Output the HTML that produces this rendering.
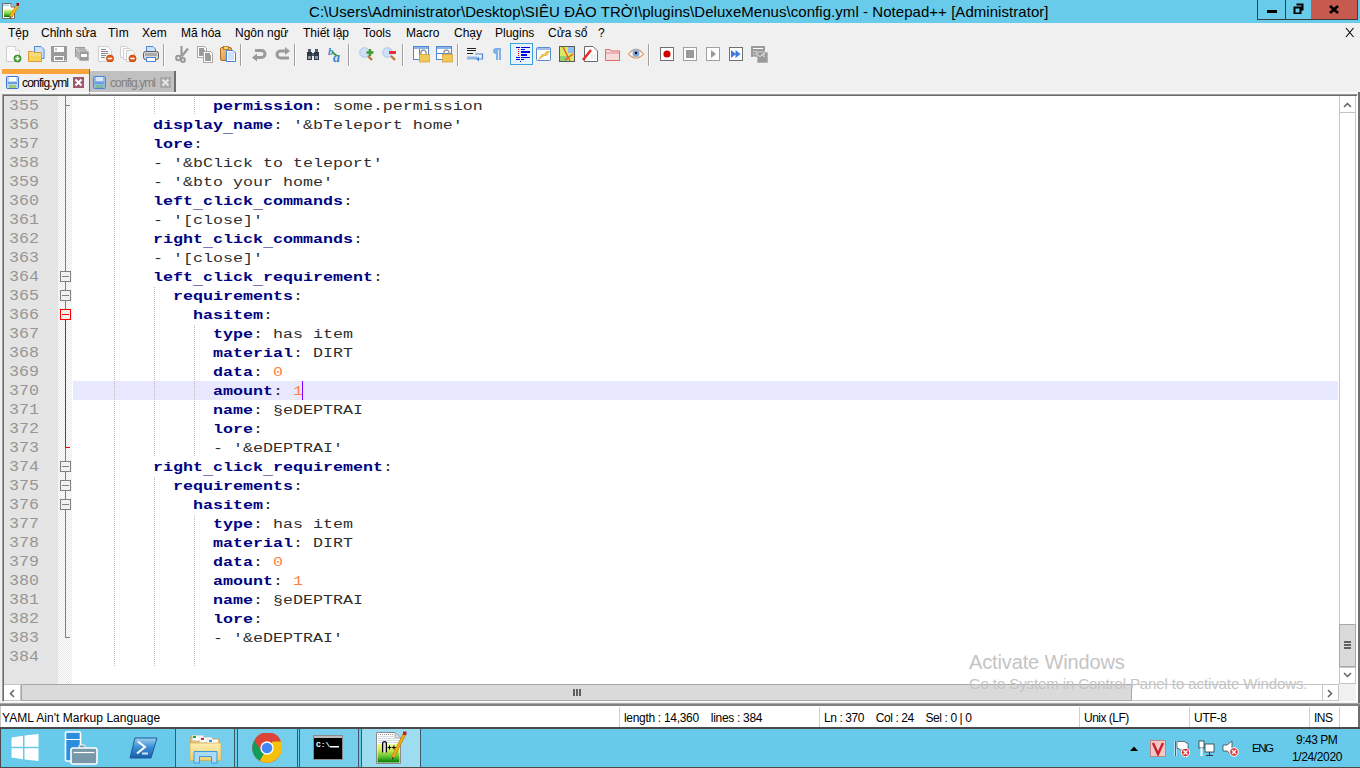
<!DOCTYPE html>
<html><head><meta charset="utf-8">
<style>
*{margin:0;padding:0;box-sizing:border-box}
html,body{width:1360px;height:768px;overflow:hidden;background:#f0f0f0;font-family:"Liberation Sans",sans-serif;position:relative}
.a{position:absolute}
#title{left:0;top:0;width:1360px;height:23px;background:#69cbea}
#ttext{left:309px;top:3px;font-size:15px;color:#000;white-space:nowrap}
.wb{top:0;height:20px;border:1px solid #3c3c3c;border-top:none}
#menu{left:0;top:23px;width:1360px;height:19px;background:#f0f0f0}
.mi{top:26px;font-size:12px;color:#000;white-space:nowrap}
.sep{top:44px;width:2px;height:22px;border-left:1px solid #a0a0a0;border-right:1px solid #fff}
.ic{top:46px;width:16px;height:16px}
#ed{left:2px;top:94px;width:1356px;height:608px;border-top:1px solid #a0a0a0;border-left:1px solid #a0a0a0;border-right:1px solid #fff;border-bottom:1px solid #fff;background:#fff;box-shadow:inset 1px 1px 0 #696969}
#lnm{left:4px;top:96px;width:54px;height:588px;background:#e4e4e4}
#fm{left:58px;top:96px;width:14px;height:588px;background-color:#fff;background-image:linear-gradient(45deg,#e8e8e8 25%,transparent 25%,transparent 75%,#e8e8e8 75%),linear-gradient(45deg,#e8e8e8 25%,transparent 25%,transparent 75%,#e8e8e8 75%);background-size:2px 2px;background-position:0 1px,1px 0}
.ln{left:9px;height:19px;font-family:"Liberation Mono",monospace;font-size:16.6667px;color:#969696;line-height:19px;transform:scaleY(0.91);transform-origin:0 14px}
.code{left:73px;height:19px;font-family:"Liberation Mono",monospace;font-size:16.6667px;color:#2e2e2e;white-space:pre;line-height:19px;transform:scaleY(0.8);transform-origin:0 14px}
.k{color:#000080;font-weight:bold}
.n{color:#ff8040}
.g{width:1px;background-image:linear-gradient(#bcbcbc 50%,transparent 50%);background-size:1px 2px;background-position:0 1px}
.st{top:710px;font-size:12px;color:#000;white-space:nowrap}
#task{left:0;top:728px;width:1360px;height:40px;background:#69cbea;border-top:1px solid #3d8aa6}
.tt{top:75px;font-size:12px;white-space:nowrap;letter-spacing:-0.3px}
.sd{top:707px;width:1px;height:20px;background:#d0d0d0}
.tb{top:729px;height:38px;background:#74ceec;border-left:1px solid #3c5a68;border-right:1px solid #3c5a68}
#root{position:absolute;left:0;top:0;width:1360px;height:768px;overflow:hidden}
.u{position:relative;top:3.5px}

</style></head><body>
<div id="title" class="a"></div>
<div id="appicon" class="a"></div>
<div class="a" style="left:309.00px;top:3px;font-size:15px;color:#000;letter-spacing:0.049px;white-space:pre;">C:\Users\Administrator\Desktop\SIÊU ĐẢO TRỜI\plugins\DeluxeMenus\config.yml - Notepad++ [Administrator]</div>
<div class="a wb" style="left:1257px;width:29px;background:#69cbea"><div class="a" style="left:9px;top:10px;width:10px;height:3px;background:#000"></div></div>
<div class="a wb" style="left:1286px;width:26px;background:#69cbea;border-left:none;border-right:none"><svg class="a" style="left:7px;top:3px" width="11" height="11"><path d="M1.5 4.5h6v6h-6z M3.5 1.5h6v6" fill="none" stroke="#000" stroke-width="2"/></svg></div>
<div class="a wb" style="left:1311px;width:47px;background:#c75a4f;border-left:none"><svg class="a" style="left:18px;top:5px" width="10" height="9"><path d="M1 1L9 8M9 1L1 8" stroke="#000" stroke-width="2.6"/></svg></div>
<div id="menu" class="a"></div>
<div class="a mi" style="left:8px">Tệp</div>
<div class="a mi" style="left:41px">Chỉnh sửa</div>
<div class="a mi" style="left:108px">Tìm</div>
<div class="a mi" style="left:142px">Xem</div>
<div class="a mi" style="left:181px">Mã hóa</div>
<div class="a mi" style="left:235px">Ngôn ngữ</div>
<div class="a mi" style="left:303px">Thiết lập</div>
<div class="a mi" style="left:363px">Tools</div>
<div class="a mi" style="left:406px">Macro</div>
<div class="a mi" style="left:454px">Chạy</div>
<div class="a mi" style="left:495px">Plugins</div>
<div class="a mi" style="left:548px">Cửa sổ</div>
<div class="a mi" style="left:598px">?</div>
<svg class="a" style="left:1345px;top:27px" width="10" height="11"><path d="M1 1L8.5 10M8.5 1L1 10" stroke="#000" stroke-width="1.1"/></svg>
<div class="a sep" style="left:163px"></div>
<div class="a sep" style="left:240px"></div>
<div class="a sep" style="left:294px"></div>
<div class="a sep" style="left:348px"></div>
<div class="a sep" style="left:402px"></div>
<div class="a sep" style="left:457px"></div>
<div class="a sep" style="left:648px"></div>
<!-- app icon -->
<svg class="a" style="left:2px;top:3px" width="17" height="17"><path d="M0.5 0.5H9L12.5 4V15.5H0.5Z" fill="#fff" stroke="#6e6a6a"/><path d="M9 0.5V4H12.5" fill="#ddd" stroke="#6e6a6a"/><defs><linearGradient id="ag" x1="0" y1="0" x2="0" y2="1"><stop offset="0" stop-color="#e8f48a"/><stop offset="0.6" stop-color="#5fd03a"/><stop offset="1" stop-color="#0a6a10"/></linearGradient></defs><rect x="2" y="6.5" width="9" height="7.5" fill="url(#ag)"/><path d="M15.2 3.2L8.6 13.8" stroke="#d08a08" stroke-width="3.2"/><path d="M15.2 3.2L8.6 13.8" stroke="#fbb818" stroke-width="2"/><path d="M8.8 13.5L8 15.2" stroke="#444" stroke-width="1.2"/><rect x="14.5" y="0" width="2.8" height="2.8" fill="#a00010"/><path d="M2 1.5V3M4 1.5V3M6 1.5V3" stroke="#4aa8d8" stroke-width="1"/></svg>
<!-- new -->
<svg class="a" style="left:6px;top:46px" width="16" height="17"><path d="M0.5 0.5H9.5L13.5 4.5V15.5H0.5Z" fill="#fbfbfb" stroke="#cfcfcf"/><path d="M9.5 0.5V4.5H13.5" fill="#eee" stroke="#d8d8d8"/><circle cx="11.5" cy="12.5" r="3.6" fill="#3f9a2a" stroke="#2a7a1a" stroke-width="0.6"/><path d="M11.5 10.3V14.7M9.3 12.5H13.7" stroke="#fff" stroke-width="1.5"/></svg>
<!-- open -->
<svg class="a" style="left:28px;top:46px" width="17" height="17"><path d="M6.5 0.5H13L16 3.5V12.5H6.5Z" fill="#cfe2fb" stroke="#4d86d8"/><path d="M0.5 5.5H5L6 6.5H13.5V15.5H0.5Z" fill="#f6dc80" stroke="#e09a2a"/><rect x="1" y="10" width="12" height="5" fill="#f7d24a" opacity="0.7"/></svg>
<!-- save -->
<svg class="a" style="left:51px;top:46px" width="16" height="16"><path d="M0 0H16V16H1L0 15Z" fill="#9a9a9a"/><rect x="3" y="1" width="10" height="5" fill="#fff"/><rect x="4.5" y="2" width="1" height="3" fill="#9a9a9a"/><rect x="3" y="10" width="10" height="5" fill="#fff"/><rect x="4" y="11" width="8" height="3" fill="#9a9a9a"/><rect x="14" y="14" width="1" height="1" fill="#fff"/></svg>
<!-- save all -->
<svg class="a" style="left:75px;top:47px" width="15" height="15"><path d="M0 0H10V10H0Z" fill="#9a9a9a"/><path d="M2 2H12V12H2Z" fill="#9a9a9a" stroke="#f0f0f0" stroke-width="0.6"/><path d="M4 4H14V14H4Z" fill="#9a9a9a" stroke="#f0f0f0" stroke-width="0.6"/><rect x="6" y="7" width="6" height="3" fill="#fff"/><rect x="1" y="1" width="1" height="1" fill="#fff"/><rect x="3" y="3" width="1" height="1" fill="#fff"/></svg>
<!-- close -->
<svg class="a" style="left:98px;top:46px" width="16" height="16"><path d="M0.5 0.5H9.5L13.5 4.5V15.5H0.5Z" fill="#fbfbfb" stroke="#cfcfcf"/><path d="M3 3.5H8M3 5.5H10M3 7.5H10M3 9.5H8M3 11.5H7" stroke="#8a8a8a" stroke-width="1" shape-rendering="crispEdges"/><circle cx="12" cy="12.5" r="3.6" fill="#e05a10" stroke="#b84000" stroke-width="0.6"/><path d="M9.8 12.5H14.2" stroke="#fff" stroke-width="1.5"/></svg>
<!-- close all -->
<svg class="a" style="left:120px;top:46px" width="17" height="16"><path d="M0.5 0.5H6.5L8.5 2.5V11.5H0.5Z" fill="#fbfbfb" stroke="#cfcfcf"/><path d="M3.5 2.5H9.5L11.5 4.5V13.5H3.5Z" fill="#fbfbfb" stroke="#cfcfcf"/><path d="M6.5 4.5H12.5L14.5 6.5V15.5H6.5Z" fill="#fbfbfb" stroke="#cfcfcf"/><circle cx="12.5" cy="12.5" r="3.6" fill="#e05a10" stroke="#b84000" stroke-width="0.6"/><path d="M10.3 12.5H14.7" stroke="#fff" stroke-width="1.5"/></svg>
<!-- print -->
<svg class="a" style="left:143px;top:46px" width="17" height="17"><path d="M3.5 0.5H10L12.5 3V6.5H3.5Z" fill="#cde2fb" stroke="#4d86d8"/><rect x="0.5" y="5.5" width="15" height="8" rx="2" fill="#d8d8d8" stroke="#5a5a5a"/><rect x="2" y="7" width="12" height="3" fill="#aaa"/><rect x="3.5" y="11.5" width="9" height="4" fill="#fff" stroke="#4d86d8"/></svg>
<!-- cut -->
<svg class="a" style="left:175px;top:46px" width="14" height="17"><path d="M6.5 0V10" stroke="#9a9a9a" stroke-width="2.2"/><path d="M13 2.5L6.5 10.5" stroke="#9a9a9a" stroke-width="2.4"/><circle cx="3.3" cy="12" r="2.2" fill="none" stroke="#9a9a9a" stroke-width="2"/><circle cx="8" cy="14" r="1.9" fill="none" stroke="#9a9a9a" stroke-width="2"/></svg>
<!-- copy -->
<svg class="a" style="left:197px;top:46px" width="17" height="17" shape-rendering="crispEdges"><path d="M0.5 0.5H7.5L9.5 2.5V11.5H0.5Z" fill="#fff" stroke="#a8a8a8"/><path d="M2 2H7V4H8V10H2Z" fill="#9a9a9a"/><path d="M6.5 5.5H13.5L15.5 7.5V16.5H6.5Z" fill="#fff" stroke="#a8a8a8"/><path d="M8 7H13V9H14V15H8Z" fill="#9a9a9a"/></svg>
<!-- paste -->
<svg class="a" style="left:220px;top:46px" width="17" height="17"><defs><linearGradient id="cbg" x1="0" y1="0" x2="1" y2="1"><stop offset="0" stop-color="#f2cc80"/><stop offset="1" stop-color="#d08a40"/></linearGradient></defs><rect x="0.5" y="1.5" width="11" height="13" rx="1.5" fill="url(#cbg)" stroke="#b06a20"/><rect x="3.5" y="0.5" width="5" height="3" fill="#f8dc70" stroke="#b06a20" stroke-width="0.8"/><path d="M6.5 4.5H13L15.5 7V15.5H6.5Z" fill="#fff" stroke="#4a7fd8"/><rect x="8" y="6" width="6" height="8" fill="#cfe0fa"/></svg>
<!-- undo -->
<svg class="a" style="left:252px;top:47px" width="15" height="15"><path d="M3 3.5H9.5A3.5 3.5 0 0 1 9.5 10.5H5" fill="none" stroke="#9a9a9a" stroke-width="3"/><path d="M0 10.5L5 6.5V14.5Z" fill="#9a9a9a"/></svg>
<!-- redo -->
<svg class="a" style="left:275px;top:47px" width="15" height="15"><path d="M14 11H5.5A3.5 3.5 0 0 1 5.5 4H10" fill="none" stroke="#9a9a9a" stroke-width="3"/><path d="M15 4L10 0V8Z" fill="#9a9a9a"/></svg>
<!-- find -->
<svg class="a" style="left:306px;top:48px" width="14" height="13"><path d="M1 4H6V12H1Z M8 4H13V12H8Z" fill="#303a46"/><path d="M2 1H5V4H2Z M9 1H12V4H9Z M6 5H8V8H6Z" fill="#505c68"/><rect x="2" y="8" width="3" height="3" fill="#8a96a0"/><rect x="9" y="8" width="3" height="3" fill="#8a96a0"/></svg>
<!-- replace -->
<svg class="a" style="left:328px;top:46px" width="17" height="17"><text x="0" y="9" font-family="Liberation Serif" font-style="italic" font-weight="bold" font-size="11" fill="#3a80d8">b</text><text x="5" y="16" font-family="Liberation Serif" font-style="italic" font-weight="bold" font-size="14" fill="#3a80d8">a</text><path d="M4 6L9 10" stroke="#3a9a3a" stroke-width="1.8"/></svg>
<!-- zoom in -->
<svg class="a" style="left:359px;top:47px" width="16" height="15"><circle cx="5.5" cy="5.5" r="4.8" fill="#cfe0f6" stroke="#a8c4e8"/><path d="M9 9L13 13" stroke="#b8783a" stroke-width="2.4"/><path d="M11 2V9M7.5 5.5H14.5" stroke="#3a9a2a" stroke-width="2.4"/></svg>
<!-- zoom out -->
<svg class="a" style="left:382px;top:47px" width="16" height="15"><circle cx="5.5" cy="5.5" r="4.8" fill="#cfe0f6" stroke="#a8c4e8"/><path d="M9 9L13 13" stroke="#b8783a" stroke-width="2.4"/><rect x="7" y="4" width="7" height="3" fill="#e8303a"/></svg>
<!-- sync v -->
<svg class="a" style="left:413px;top:46px" width="17" height="17"><rect x="0.5" y="0.5" width="15" height="13" fill="#fff" stroke="#4d86d8"/><rect x="1" y="1" width="14" height="2" fill="#8fb4e8"/><path d="M6.5 3V13" stroke="#4d86d8"/><path d="M8 8.5V6.5A2.5 2.5 0 0 1 13 6.5V8.5" fill="none" stroke="#9a9a9a" stroke-width="1.5"/><rect x="6.5" y="8.5" width="10" height="7.5" fill="#f0c85a" stroke="#d89a30" stroke-width="0.7"/></svg>
<!-- sync h -->
<svg class="a" style="left:436px;top:46px" width="17" height="17"><rect x="0.5" y="0.5" width="15" height="13" fill="#fff" stroke="#4d86d8"/><rect x="1" y="1" width="14" height="2" fill="#8fb4e8"/><path d="M1 7.5H15" stroke="#4d86d8"/><path d="M8 8.5V6.5A2.5 2.5 0 0 1 13 6.5V8.5" fill="none" stroke="#9a9a9a" stroke-width="1.5"/><rect x="6.5" y="8.5" width="10" height="7.5" fill="#f0c85a" stroke="#d89a30" stroke-width="0.7"/></svg>
<!-- wrap -->
<svg class="a" style="left:467px;top:47px" width="17" height="15"><path d="M0 1.5H9M0 3.5H9M0 6.5H6" stroke="#222" stroke-width="1.2"/><rect x="0" y="9.5" width="10" height="3" fill="#8fb4e8"/><path d="M8 7H15.5V12H11" fill="none" stroke="#4d86d8" stroke-width="1.2"/><path d="M9 12L12 9.5V14.5Z" fill="#4d86d8"/></svg>
<!-- pilcrow -->
<svg class="a" style="left:492px;top:47px" width="10" height="14"><path d="M4 1H9V13H7V3H6V13H4V7A3 3 0 0 1 4 1Z" fill="#7fb0ea"/></svg>
<!-- indent guide (checked) -->
<div class="a" style="left:510px;top:43px;width:23px;height:22px;background:#e5f3fe;border:1px solid #3ca0dc"></div>
<svg class="a" style="left:515px;top:46px" width="16" height="17" shape-rendering="crispEdges"><g fill="#0000e6"><rect x="1" y="1" width="4" height="1"/><rect x="6" y="1" width="9" height="1"/><rect x="6" y="3" width="4" height="1"/><rect x="6" y="5" width="9" height="2"/><rect x="6" y="8" width="6" height="2"/><rect x="1" y="11" width="4" height="1"/><rect x="6" y="11" width="9" height="1"/><rect x="1" y="13" width="4" height="1"/><rect x="6" y="13" width="3" height="1"/><rect x="5" y="15" width="1" height="1"/></g><g fill="#e00000"><rect x="3" y="3" width="1" height="1"/><rect x="3" y="5" width="1" height="1"/><rect x="3" y="7" width="1" height="1"/><rect x="3" y="9" width="1" height="1"/></g></svg>
<!-- udl -->
<svg class="a" style="left:536px;top:47px" width="16" height="15"><rect x="0.5" y="0.5" width="14" height="13" rx="1" fill="#fff" stroke="#5a8ad0"/><rect x="1" y="1" width="13" height="2" fill="#9fc0ee"/><path d="M2.5 12.5L6 7.5H8L10.5 4.5H13.5L10.5 8.5H8.5Z" fill="#f2ca48" stroke="#d8a030" stroke-width="0.6"/></svg>
<!-- doc map -->
<svg class="a" style="left:559px;top:46px" width="17" height="17"><rect x="0.5" y="0.5" width="15" height="15" fill="#d8e860" stroke="#5a5a5a"/><rect x="9" y="1" width="6" height="6" fill="#8fc0f0"/><rect x="1" y="10" width="8" height="5" fill="#90d070"/><path d="M4 1L11 15M14 8L6 14" stroke="#f04a2a" stroke-width="1.2"/></svg>
<!-- func list -->
<svg class="a" style="left:582px;top:46px" width="17" height="17"><path d="M2.5 0.5H11L15.5 5V15.5H2.5Z" fill="#fff" stroke="#6a6a6a"/><path d="M1 14L9 4" stroke="#e82a2a" stroke-width="2.5"/><path d="M10 8V13M13 8V13" stroke="#ccc" stroke-width="0.8"/></svg>
<!-- folder ws -->
<svg class="a" style="left:605px;top:49px" width="16" height="12"><path d="M0.5 0.5H5L6 2H14.5V11.5H0.5Z" fill="#f8dcdc" stroke="#e06a6a"/><path d="M1 4H14" stroke="#e08a8a"/></svg>
<!-- monitoring -->
<svg class="a" style="left:628px;top:47px" width="17" height="14"><path d="M0.5 7Q8 -1 15.5 7Q8 15 0.5 7Z" fill="#fff" stroke="#e0a070" stroke-width="1.2"/><path d="M3 4Q8 0 13 4" stroke="#b0b0b0" stroke-width="1.2" fill="none"/><circle cx="8" cy="6.5" r="3.5" fill="#80a8e0"/><circle cx="8" cy="6" r="1.2" fill="#000"/></svg>
<!-- macro record -->
<svg class="a" style="left:660px;top:47px" width="14" height="14"><rect x="0.5" y="0.5" width="13" height="13" fill="#fff" stroke="#707070"/><circle cx="7" cy="7" r="3.6" fill="#d00000"/></svg>
<svg class="a" style="left:683px;top:47px" width="14" height="14"><rect x="0.5" y="0.5" width="13" height="13" fill="#fff" stroke="#a0a0a0"/><rect x="3" y="3" width="8" height="8" fill="#9a9a9a"/></svg>
<svg class="a" style="left:706px;top:47px" width="14" height="14"><rect x="0.5" y="0.5" width="13" height="13" fill="#fff" stroke="#a0a0a0"/><path d="M5 3L10 7L5 11Z" fill="#9a9a9a"/></svg>
<svg class="a" style="left:729px;top:47px" width="14" height="14"><rect x="0.5" y="0.5" width="13" height="13" fill="#fff" stroke="#707070"/><path d="M2 3L7 7L2 11Z M6.5 3L11.5 7L6.5 11Z" fill="#3a7ae0"/></svg>
<svg class="a" style="left:751px;top:46px" width="17" height="17"><rect x="0" y="0" width="14" height="11" fill="#9a9a9a"/><path d="M2 2.5H12" stroke="#fff"/><path d="M3 5V6M3 7.5V8.5M3 10V11M5 5V6M5 7.5V8.5" stroke="#fff"/><rect x="6" y="6" width="11" height="11" fill="#9a9a9a" stroke="#f0f0f0" stroke-width="0.6"/><path d="M8 8V10H10V8M12 8H14M12 8V10H14" stroke="#fff" stroke-width="1"/></svg>

<div class="a" style="left:2px;top:69px;width:88px;height:25px;background:#f0f0f0;border-right:1px solid #6e6e6e"></div>
<div class="a" style="left:2px;top:69px;width:87px;height:5px;background:#faa53c"></div>
<div class="a" style="left:90px;top:71px;width:86px;height:21px;background:#c0c0c0;border-right:2px solid #6e6e6e"></div>
<svg class="a" style="left:6px;top:76px" width="13" height="13"><rect x="0.5" y="0.5" width="12" height="12" rx="1" fill="#bcd3f2" stroke="#3f73c8"/><rect x="3" y="1" width="7" height="4" fill="#fff"/><rect x="2" y="6" width="9" height="2" fill="#6b9ee0"/><rect x="3" y="9" width="7" height="3" fill="#9acb6e"/></svg>
<svg class="a" style="left:73px;top:77px" width="11" height="11"><rect width="11" height="11" fill="#a0566f"/><path d="M2.5 2.5L8.5 8.5M8.5 2.5L2.5 8.5" stroke="#fff" stroke-width="2"/></svg>
<svg class="a" style="left:93px;top:76px" width="13" height="13"><rect x="0.5" y="0.5" width="12" height="12" rx="1" fill="#8fb8ea" stroke="#4a86d8"/><rect x="3" y="1" width="7" height="4" fill="#d8e8f8"/><rect x="2" y="6" width="9" height="2" fill="#6b9ee0"/><rect x="3" y="9" width="7" height="3" fill="#7fb8a0"/></svg>
<svg class="a" style="left:160px;top:77px" width="11" height="11"><rect width="11" height="11" fill="#a8a8a8"/><path d="M2.5 2.5L8.5 8.5M8.5 2.5L2.5 8.5" stroke="#e8e8e8" stroke-width="2"/></svg>

<div class="a" style="left:22.00px;top:76px;font-size:12px;color:#000;letter-spacing:-0.778px;white-space:pre;">config.yml</div>
<div class="a" style="left:110.00px;top:76px;font-size:12px;color:#808080;letter-spacing:-0.889px;white-space:pre;">config.yml</div>
<div id="ed" class="a"></div>
<div id="lnm" class="a"></div>
<div id="fm" class="a"></div>
<div class="a" style="left:73px;top:381px;width:1265px;height:19px;background:#e8e8ff"></div>
<div class="a g" style="left:114px;top:96px;height:570px"></div>
<div class="a g" style="left:154px;top:96px;height:19px"></div>
<div class="a g" style="left:154px;top:286px;height:171px"></div>
<div class="a g" style="left:154px;top:476px;height:190px"></div>
<div class="a g" style="left:194px;top:96px;height:19px"></div>
<div class="a g" style="left:194px;top:324px;height:133px"></div>
<div class="a g" style="left:194px;top:514px;height:152px"></div>
<div class="a ln" style="top:96px">355</div>
<div class="a code" style="top:96px">              <span class="k">permission</span>: some.permission</div>
<div class="a ln" style="top:115px">356</div>
<div class="a code" style="top:115px">        <span class="k">display<span class="u">_</span>name</span>: &#x27;&amp;bTeleport home&#x27;</div>
<div class="a ln" style="top:134px">357</div>
<div class="a code" style="top:134px">        <span class="k">lore</span>:</div>
<div class="a ln" style="top:153px">358</div>
<div class="a code" style="top:153px">        - &#x27;&amp;bClick to teleport&#x27;</div>
<div class="a ln" style="top:172px">359</div>
<div class="a code" style="top:172px">        - &#x27;&amp;bto your home&#x27;</div>
<div class="a ln" style="top:191px">360</div>
<div class="a code" style="top:191px">        <span class="k">left<span class="u">_</span>click<span class="u">_</span>commands</span>:</div>
<div class="a ln" style="top:210px">361</div>
<div class="a code" style="top:210px">        - &#x27;[close]&#x27;</div>
<div class="a ln" style="top:229px">362</div>
<div class="a code" style="top:229px">        <span class="k">right<span class="u">_</span>click<span class="u">_</span>commands</span>:</div>
<div class="a ln" style="top:248px">363</div>
<div class="a code" style="top:248px">        - &#x27;[close]&#x27;</div>
<div class="a ln" style="top:267px">364</div>
<div class="a code" style="top:267px">        <span class="k">left<span class="u">_</span>click<span class="u">_</span>requirement</span>:</div>
<div class="a ln" style="top:286px">365</div>
<div class="a code" style="top:286px">          <span class="k">requirements</span>:</div>
<div class="a ln" style="top:305px">366</div>
<div class="a code" style="top:305px">            <span class="k">hasitem</span>:</div>
<div class="a ln" style="top:324px">367</div>
<div class="a code" style="top:324px">              <span class="k">type</span>: has item</div>
<div class="a ln" style="top:343px">368</div>
<div class="a code" style="top:343px">              <span class="k">material</span>: DIRT</div>
<div class="a ln" style="top:362px">369</div>
<div class="a code" style="top:362px">              <span class="k">data</span>: <span class="n">0</span></div>
<div class="a ln" style="top:381px">370</div>
<div class="a code" style="top:381px">              <span class="k">amount</span>: <span class="n">1</span></div>
<div class="a ln" style="top:400px">371</div>
<div class="a code" style="top:400px">              <span class="k">name</span>: §eDEPTRAI</div>
<div class="a ln" style="top:419px">372</div>
<div class="a code" style="top:419px">              <span class="k">lore</span>:</div>
<div class="a ln" style="top:438px">373</div>
<div class="a code" style="top:438px">              - &#x27;&amp;eDEPTRAI&#x27;</div>
<div class="a ln" style="top:457px">374</div>
<div class="a code" style="top:457px">        <span class="k">right<span class="u">_</span>click<span class="u">_</span>requirement</span>:</div>
<div class="a ln" style="top:476px">375</div>
<div class="a code" style="top:476px">          <span class="k">requirements</span>:</div>
<div class="a ln" style="top:495px">376</div>
<div class="a code" style="top:495px">            <span class="k">hasitem</span>:</div>
<div class="a ln" style="top:514px">377</div>
<div class="a code" style="top:514px">              <span class="k">type</span>: has item</div>
<div class="a ln" style="top:533px">378</div>
<div class="a code" style="top:533px">              <span class="k">material</span>: DIRT</div>
<div class="a ln" style="top:552px">379</div>
<div class="a code" style="top:552px">              <span class="k">data</span>: <span class="n">0</span></div>
<div class="a ln" style="top:571px">380</div>
<div class="a code" style="top:571px">              <span class="k">amount</span>: <span class="n">1</span></div>
<div class="a ln" style="top:590px">381</div>
<div class="a code" style="top:590px">              <span class="k">name</span>: §eDEPTRAI</div>
<div class="a ln" style="top:609px">382</div>
<div class="a code" style="top:609px">              <span class="k">lore</span>:</div>
<div class="a ln" style="top:628px">383</div>
<div class="a code" style="top:628px">              - &#x27;&amp;eDEPTRAI&#x27;</div>
<div class="a ln" style="top:647px">384</div>
<div class="a" style="left:302px;top:381px;width:1px;height:19px;background:#8000ff"></div>
<svg class="a" style="left:58px;top:96px" width="14" height="588">
<g fill="none" stroke="#808080" stroke-width="1" shape-rendering="crispEdges">
<path d="M7.5 0V175 M7.5 9.5H12"/>
<path d="M7.5 186V194 M7.5 205V213"/>
<path d="M7.5 352V365 M7.5 376V384 M7.5 395V403 M7.5 414V541.5H12"/>
<rect x="2.5" y="175.5" width="10" height="10" fill="#f0f0f0"/>
<rect x="2.5" y="194.5" width="10" height="10" fill="#f0f0f0"/>
<rect x="2.5" y="365.5" width="10" height="10" fill="#f0f0f0"/>
<rect x="2.5" y="384.5" width="10" height="10" fill="#f0f0f0"/>
<rect x="2.5" y="403.5" width="10" height="10" fill="#f0f0f0"/>
<path d="M4 180.5H11 M4 199.5H11 M4 370.5H11 M4 389.5H11 M4 408.5H11"/>
</g>
<g fill="none" stroke="#ff0000" stroke-width="1" shape-rendering="crispEdges">
<path d="M7.5 224V351.5H12"/>
<rect x="2.5" y="213.5" width="10" height="10" fill="#f0f0f0"/>
<path d="M4 218.5H11"/>
</g>
</svg>

<!-- vertical scrollbar -->
<div class="a" style="left:1339px;top:96px;width:17px;height:588px;background:#fff;border-left:1px solid #c4c4c4;border-right:1px solid #c4c4c4"></div>
<div class="a" style="left:1339px;top:112px;width:17px;height:1px;background:#c4c4c4"></div>
<svg class="a" style="left:1343px;top:102px" width="9" height="6"><path d="M1 5L4.5 1.5L8 5" fill="none" stroke="#606060" stroke-width="1.5"/></svg>
<div class="a" style="left:1339px;top:624px;width:17px;height:43px;background:#dadada;border:1px solid #a8a8a8"></div>
<div class="a" style="left:1344px;top:641px;width:7px;height:2px;background:#606060"></div>
<div class="a" style="left:1344px;top:644px;width:7px;height:2px;background:#606060"></div>
<div class="a" style="left:1344px;top:647px;width:7px;height:2px;background:#606060"></div>
<div class="a" style="left:1339px;top:667px;width:17px;height:1px;background:#c4c4c4"></div>
<div class="a" style="left:1339px;top:683px;width:17px;height:1px;background:#c4c4c4"></div>
<svg class="a" style="left:1343px;top:672px" width="9" height="6"><path d="M1 1L4.5 4.5L8 1" fill="none" stroke="#606060" stroke-width="1.5"/></svg>
<!-- horizontal scrollbar -->
<div class="a" style="left:4px;top:684px;width:1335px;height:17px;background:#fff;border-top:1px solid #c4c4c4;border-bottom:1px solid #c4c4c4"></div>
<div class="a" style="left:20px;top:684px;width:1px;height:17px;background:#c4c4c4"></div>
<svg class="a" style="left:9px;top:689px" width="6" height="9"><path d="M5 1L1.5 4.5L5 8" fill="none" stroke="#606060" stroke-width="1.5"/></svg>
<div class="a" style="left:21px;top:684px;width:1111px;height:17px;background:#dadada;border:1px solid #a8a8a8"></div>
<div class="a" style="left:573px;top:689px;width:2px;height:7px;background:#606060"></div>
<div class="a" style="left:576px;top:689px;width:2px;height:7px;background:#606060"></div>
<div class="a" style="left:579px;top:689px;width:2px;height:7px;background:#606060"></div>
<div class="a" style="left:1322px;top:684px;width:1px;height:17px;background:#c4c4c4"></div>
<div class="a" style="left:1338px;top:684px;width:1px;height:17px;background:#c4c4c4"></div>
<svg class="a" style="left:1327px;top:689px" width="6" height="9"><path d="M1 1L4.5 4.5L1 8" fill="none" stroke="#606060" stroke-width="1.5"/></svg>
<div class="a" style="left:1339px;top:684px;width:17px;height:17px;background:#f0f0f0"></div>
<!-- right outer edge -->
<div class="a" style="left:1358px;top:92px;width:2px;height:614px;background:#6e6e6e"></div>
<!-- activate windows watermark -->
<div class="a" style="left:1px;top:92px;width:1357px;height:1px;background:#fff"></div>

<div class="a" style="left:969.00px;top:651px;font-size:20px;color:#c4c4c4;letter-spacing:-0.133px;white-space:pre;">Activate Windows</div>
<div class="a" style="left:969.00px;top:675px;font-size:15px;color:#c4c4c4;letter-spacing:-0.102px;white-space:pre;">Go to System in Control Panel to activate Windows.</div>
<div class="a" style="left:0;top:703px;width:1360px;height:3px;background:#808080;border-top:1px solid #a8a8a8"></div>
<div class="a" style="left:0;top:706px;width:1360px;height:22px;background:#fff;border-bottom:1px solid #6e6e6e;border-right:2px solid #6e6e6e"></div>
<div class="a" style="left:0;top:706px;width:1px;height:21px;background:#c8c8c8"></div>
<div class="a sd" style="left:619px"></div>
<div class="a sd" style="left:819px"></div>
<div class="a sd" style="left:1079px"></div>
<div class="a sd" style="left:1189px"></div>
<div class="a sd" style="left:1309px"></div>
<div class="a sd" style="left:1339px"></div>

<div class="a" style="left:2.00px;top:711px;font-size:12px;color:#000;letter-spacing:0.040px;white-space:pre;">YAML Ain&#x27;t Markup Language</div>
<div class="a" style="left:624.00px;top:711px;font-size:12px;color:#000;letter-spacing:-0.310px;white-space:pre;">length : 14,360    lines : 384</div>
<div class="a" style="left:824.00px;top:711px;font-size:12px;color:#000;letter-spacing:-0.412px;white-space:pre;">Ln : 370    Col : 24    Sel : 0 | 0</div>
<div class="a" style="left:1084.00px;top:711px;font-size:12px;color:#000;letter-spacing:-0.500px;white-space:pre;">Unix (LF)</div>
<div class="a" style="left:1194.00px;top:711px;font-size:12px;color:#000;letter-spacing:-0.250px;white-space:pre;">UTF-8</div>
<div class="a" style="left:1314.00px;top:711px;font-size:12px;color:#000;letter-spacing:-0.500px;white-space:pre;">INS</div>
<div class="a" style="left:0;top:727px;width:1360px;height:41px;background:#68caea;border-top:2px solid #4b4b4b;border-bottom:1px solid #4b4b4b;border-left:1px solid #4b4b4b"></div>
<div class="a tb" style="left:175px;width:60px"></div>
<div class="a tb" style="left:237px;width:61px"></div>
<div class="a tb" style="left:299px;width:60px"></div>
<div class="a tb" style="left:361px;width:60px;background:#9edcf1"></div>
<!-- windows logo -->
<svg class="a" style="left:11px;top:734px" width="28" height="27"><path d="M0.5 3.5L12 1.8V12.8H0.5Z M13.5 1.6L27.5 0V12.8H13.5Z M0.5 14.2H12V25.2L0.5 23.6Z M13.5 14.2H27.5V27L13.5 25.4Z" fill="#fff"/></svg>
<!-- server manager -->
<svg class="a" style="left:64px;top:731px" width="34" height="34"><rect x="1.5" y="1" width="15" height="29" rx="1" fill="#2a8edc" stroke="#fff" stroke-width="1.6"/><line x1="1.5" y1="8.5" x2="16.5" y2="8.5" stroke="#fff" stroke-width="1"/><rect x="15" y="14" width="6" height="4" rx="1" fill="#7898aa" stroke="#fff"/><rect x="7" y="17" width="26" height="16" rx="2" fill="#7898aa" stroke="#fff" stroke-width="1.6"/><line x1="9.5" y1="21.5" x2="30.5" y2="21.5" stroke="#fff" stroke-width="1.2"/></svg>
<!-- powershell -->
<svg class="a" style="left:129px;top:737px" width="29" height="22"><defs><linearGradient id="psg" x1="0" y1="0" x2="0" y2="1"><stop offset="0" stop-color="#9fd0f0"/><stop offset="0.45" stop-color="#3c8fd6"/><stop offset="1" stop-color="#1a5ea8"/></linearGradient></defs><path d="M6 1H28L22 21H1Z" fill="url(#psg)" stroke="#1b5b9c"/><path d="M9 4.5L16 10L8 16.5" fill="none" stroke="#fff" stroke-width="2"/><rect x="13" y="15.5" width="6" height="2" fill="#cfe6f8"/></svg>
<!-- explorer -->
<svg class="a" style="left:189px;top:734px" width="33" height="30"><path d="M1.5 3H16L17.5 5H30.5V26H1.5Z" fill="#e4c270" stroke="#c9a050" stroke-width="0.8"/><rect x="3.5" y="1.5" width="11" height="5" fill="#fff" stroke="#d8d8d8" stroke-width="0.6"/><rect x="11" y="3.5" width="12" height="5" fill="#fff" stroke="#d8d8d8" stroke-width="0.6"/><rect x="18" y="5.5" width="11" height="5" fill="#fff" stroke="#d8d8d8" stroke-width="0.6"/><rect x="4" y="2" width="3" height="2" fill="#18b020"/><rect x="12" y="4" width="3" height="2" fill="#d83020"/><rect x="20" y="6" width="3" height="2" fill="#2a90e0"/><defs><linearGradient id="exg" x1="0" y1="0" x2="0" y2="1"><stop offset="0" stop-color="#fbeeb0"/><stop offset="1" stop-color="#f0d070"/></linearGradient></defs><rect x="1" y="9" width="31" height="17.5" fill="url(#exg)" stroke="#d4b060" stroke-width="0.8"/><path d="M5 29V17.5H28V29H22.5V22.5H10.5V29Z" fill="#a8dcf6" stroke="#3a9ad8" stroke-width="1"/></svg>
<!-- chrome -->
<svg class="a" style="left:252px;top:733px" width="30" height="30" viewBox="-15 -15 30 30"><circle r="14.7" fill="#db4437"/><path d="M0 0L12.73 7.35A14.7 14.7 0 0 1 -7.35 12.73Z" fill="#f4c20d"/><path d="M0 0L-7.35 12.73A14.7 14.7 0 0 1 -12.73 -7.35 L0 -14.7Z" fill="#0f9d58"/><path d="M0 -6.5H14.2A14.7 14.7 0 0 0 -12.73 -7.35L-5.6 3.3Z" fill="#db4437"/><path d="M0 6.5 L12.7 7.4 A14.7 14.7 0 0 0 14.2 -6.5 H5.6Z" fill="#f4c20d"/><circle r="6.7" fill="#fff"/><circle r="5.3" fill="#4285f4"/></svg>
<!-- cmd -->
<svg class="a" style="left:313px;top:735px" width="30" height="25"><rect x="0.5" y="0.5" width="29" height="24" fill="#000" stroke="#8c8c8c"/><rect x="1" y="1" width="28" height="2" fill="#bdbdbd"/><text x="3" y="12" font-family="Liberation Mono" font-size="8" font-weight="bold" fill="#fff">C:\</text><rect x="17" y="11" width="9" height="1.5" fill="#fff"/></svg>
<!-- npp -->
<svg class="a" style="left:375px;top:731px" width="33" height="34"><defs><linearGradient id="ng" x1="0" y1="0" x2="0" y2="1"><stop offset="0" stop-color="#f0f8a0"/><stop offset="0.35" stop-color="#c8ec50"/><stop offset="0.7" stop-color="#58c030"/><stop offset="1" stop-color="#007a00"/></linearGradient></defs>
<path d="M1.5 1.5H20L25.5 7V32.5H1.5Z" fill="#fff" stroke="#8a8a8a"/><path d="M20 1.5V7H25.5" fill="#d8d8d8" stroke="#9a9a9a" stroke-width="0.8"/>
<path d="M3 3.5H19" stroke="#9a9a9a" stroke-width="1.2" stroke-dasharray="1 1"/>
<path d="M3 5.5H24M3 7.5H24M3 9.5H24M3 11.5H24" stroke="#d4dde4" stroke-width="1"/>
<rect x="2.5" y="13" width="22" height="18.5" fill="url(#ng)"/>
<path d="M7.6 21.5V12.5A1.9 1.9 0 0 1 11.4 12.5V21.5" fill="#e0e0e0" stroke="#000" stroke-width="1.2"/>
<path d="M12.6 16.5H16.4M14.5 14.5V18.5M17 16.5H20.8M18.9 14.5V18.5" stroke="#000" stroke-width="1.1"/>
<path d="M29.5 3L18 26" stroke="#b07a10" stroke-width="3.4"/><path d="M29.5 3L18 26" stroke="#f4aa10" stroke-width="2.4"/><path d="M18 26L17.5 28.5" stroke="#333" stroke-width="1.2"/><rect x="28" y="0.5" width="3.5" height="3.5" fill="#c02030"/>
</svg>
<!-- tray -->
<svg class="a" style="left:1130px;top:746px" width="8" height="5"><path d="M0 5L4 0.5L8 5Z" fill="#000"/></svg>
<svg class="a" style="left:1150px;top:740px" width="16" height="17"><rect x="0.5" y="0.5" width="15" height="16" fill="#f3c8c4" stroke="#b88"/><path d="M3 3L8 14L13 3" fill="none" stroke="#c8202c" stroke-width="2.4"/></svg>
<svg class="a" style="left:1174px;top:740px" width="16" height="17"><path d="M1.5 1V16" stroke="#fff" stroke-width="2"/><path d="M1.5 1V16" stroke="#333" stroke-width="0.8"/><path d="M3 1.5H11L12 3H14V10H6L5 8.5H3Z" fill="#fff" stroke="#555" stroke-width="0.8"/><circle cx="11.5" cy="12.5" r="4.2" fill="#e03030" stroke="#fff"/><path d="M9.5 10.5L13.5 14.5M13.5 10.5L9.5 14.5" stroke="#fff" stroke-width="1.4"/></svg>
<svg class="a" style="left:1198px;top:740px" width="17" height="17"><rect x="1" y="1" width="5" height="7" fill="#fff" stroke="#333" stroke-width="0.8"/><path d="M3.5 8V16" stroke="#fff" stroke-width="2"/><rect x="7" y="4" width="9" height="8" fill="#fff" stroke="#333" stroke-width="0.8"/><path d="M11.5 12V15M8 15.5H15" stroke="#333"/></svg>
<svg class="a" style="left:1222px;top:740px" width="17" height="17"><path d="M1 5H5L10 1V15L5 11H1Z" fill="#fff" stroke="#444" stroke-width="0.8"/><circle cx="12" cy="12" r="4.3" fill="#e03030" stroke="#fff"/><path d="M10 10L14 14M14 10L10 14" stroke="#fff" stroke-width="1.4"/></svg>

<div class="a" style="left:1252.00px;top:741.5px;font-size:11.5px;color:#000;letter-spacing:-1.500px;white-space:pre;">ENG</div>
<div class="a" style="left:1296.00px;top:733px;font-size:12px;color:#000;letter-spacing:-0.500px;white-space:pre;">9:43 PM</div>
<div class="a" style="left:1292.00px;top:750px;font-size:12px;color:#000;letter-spacing:-0.375px;white-space:pre;">1/24/2020</div>
</body></html>
